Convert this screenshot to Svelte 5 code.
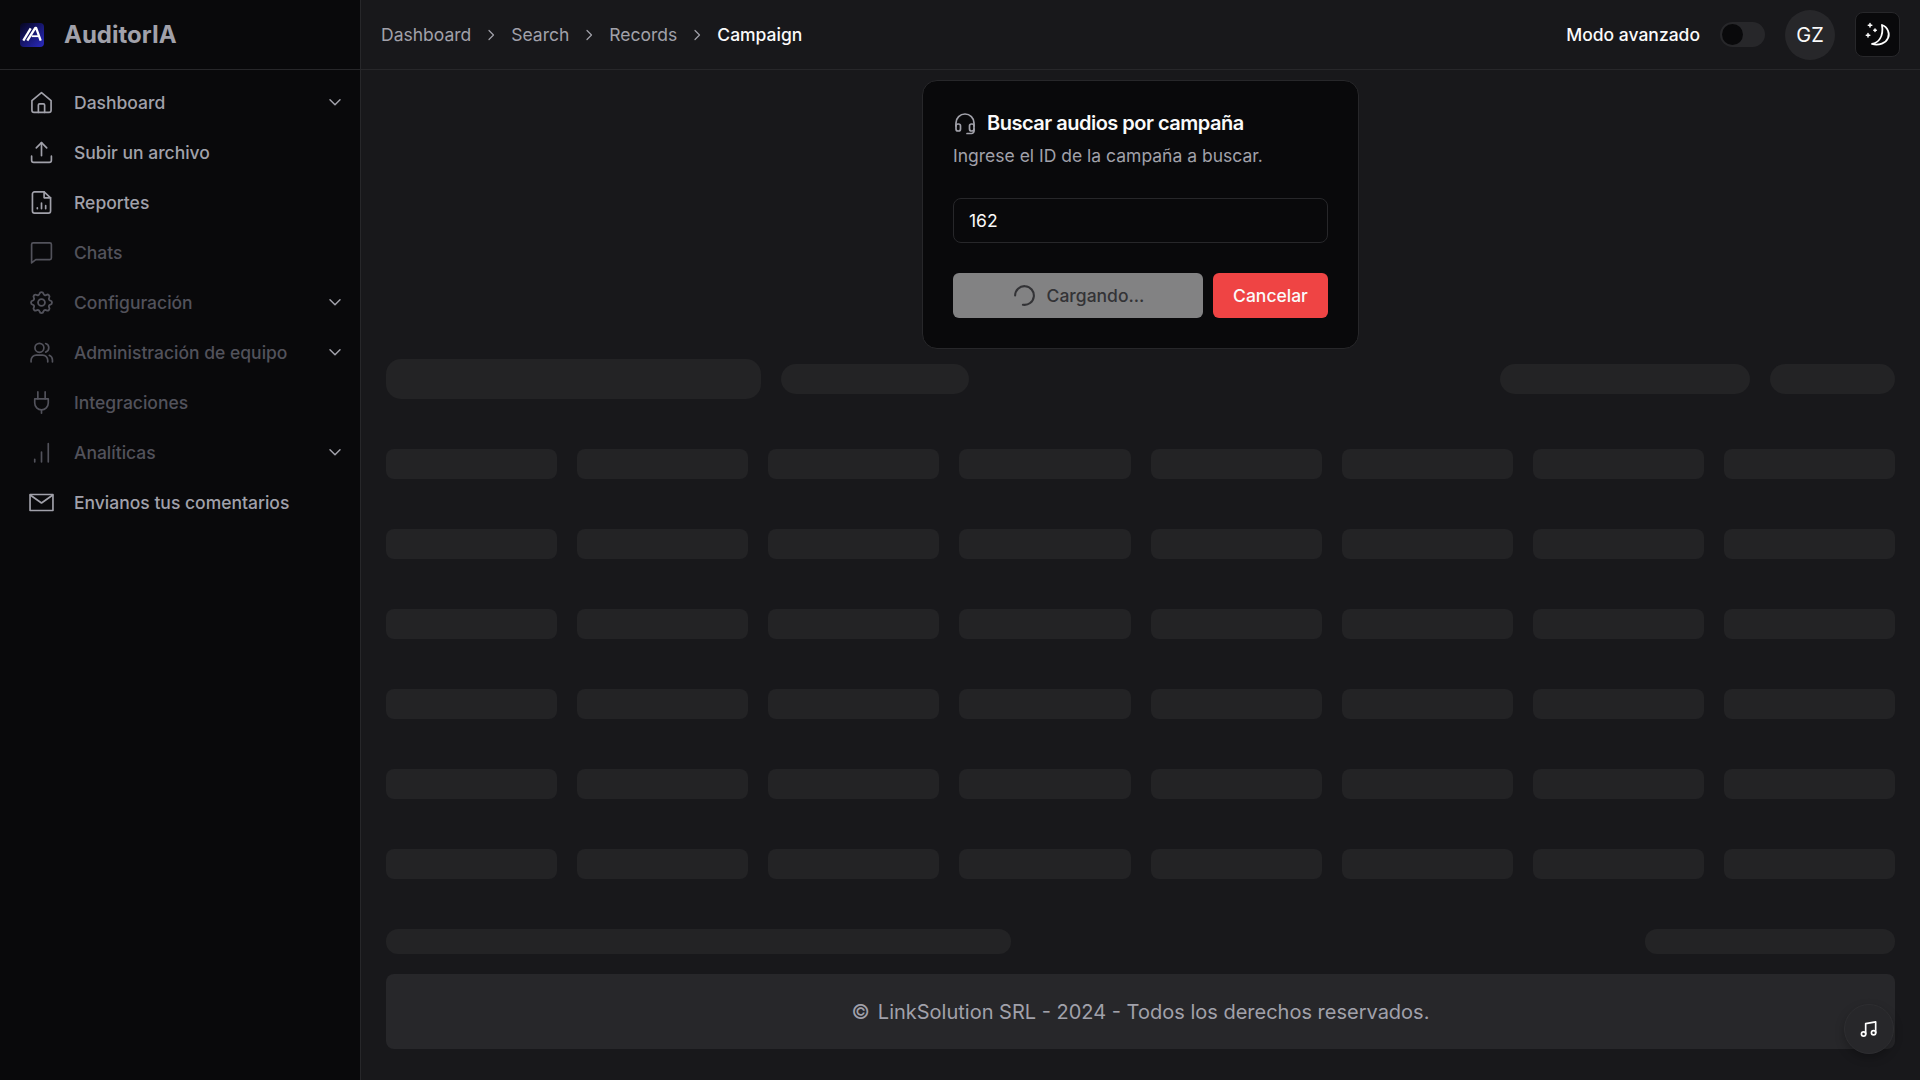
<script lang="ts">
	interface NavItem {
		label: string;
		icon: string;
		dim?: boolean;
		caret?: boolean;
	}

	const navItems: NavItem[] = [
		{ label: "Dashboard", icon: "home", caret: true },
		{ label: "Subir un archivo", icon: "upload" },
		{ label: "Reportes", icon: "report" },
		{ label: "Chats", icon: "chat", dim: true },
		{ label: "Configuración", icon: "gear", dim: true, caret: true },
		{ label: "Administración de equipo", icon: "users", dim: true, caret: true },
		{ label: "Integraciones", icon: "plug", dim: true },
		{ label: "Analíticas", icon: "bars", dim: true, caret: true },
		{ label: "Envianos tus comentarios", icon: "mail" },
	];

	const crumbs = ["Dashboard", "Search", "Records"];
	const rows = [0, 1, 2, 3, 4, 5];
	const cols = [0, 1, 2, 3, 4, 5, 6, 7];
</script>

<div class="shell">
	<aside class="sidebar">
		<div class="brand">
			<svg class="logo" viewBox="0 0 24 24" width="24" height="24" aria-hidden="true">
				<defs>
					<linearGradient id="lg" x1="0" y1="0" x2="1" y2="1">
						<stop offset="0" stop-color="#05051f" />
						<stop offset="1" stop-color="#2a2ac0" />
					</linearGradient>
				</defs>
				<rect width="24" height="24" rx="4" fill="url(#lg)" />
				<g stroke="#fff" stroke-width="2.300" fill="none" stroke-linejoin="round">
					<path d="M3.300 17.700 10.700 5.300" />
					<path d="M7.300 17.700 15.300 4.800h.8l4.600 12.900" />
					<path d="M11.700 13.200h7.600" stroke-width="1.800" />
				</g>
			</svg>
			<span class="brand-name">AuditorIA</span>
		</div>
		<nav class="nav">
			{#each navItems as item}
				<div class="nav-item" class:dim={item.dim}>
					<svg class="nav-icon" viewBox="0 0 24 24" width="25" height="25" fill="none" stroke="currentColor" stroke-width="1.600" stroke-linecap="round" stroke-linejoin="round" aria-hidden="true">
						{#if item.icon === "home"}
							<path d="M2.800 10.200 12 2.600l9.200 7.600v9.300a2 2 0 0 1-2 2H4.800a2 2 0 0 1-2-2z" />
							<path d="M9 21.500v-7a1.200 1.200 0 0 1 1.200-1.200h3.600a1.200 1.200 0 0 1 1.200 1.200v7" />
						{:else if item.icon === "upload"}
							<path d="M2.500 15.500v4a2 2 0 0 0 2 2h15a2 2 0 0 0 2-2v-4" />
							<path d="M12 15V2.500" />
							<path d="m7 7.500 5-5 5 5" />
						{:else if item.icon === "report"}
							<path d="M14.500 1.800H5.300a2 2 0 0 0-2 2v16.400a2 2 0 0 0 2 2h13.400a2 2 0 0 0 2-2V7.500z" />
							<path d="M14.500 1.800v5.700h6.200" />
							<path d="M8 18v-1M12 18v-5.500M16 18v-3" />
						{:else if item.icon === "chat"}
							<path d="M4 2.800h16a1.500 1.500 0 0 1 1.500 1.500v13a1.500 1.500 0 0 1-1.500 1.500H6.500L2.500 22V4.300A1.500 1.500 0 0 1 4 2.800z" />
						{:else if item.icon === "gear"}
							<g transform="translate(-1.200 -1.200) scale(1.100)">
								<path d="M10.300 4.300c.4-1.800 3-1.800 3.400 0a1.700 1.700 0 0 0 2.600 1.100c1.500-1 3.400.9 2.400 2.400a1.700 1.700 0 0 0 1.100 2.600c1.800.4 1.800 3 0 3.400a1.700 1.700 0 0 0-1.100 2.600c1 1.500-.9 3.400-2.400 2.400a1.700 1.700 0 0 0-2.600 1.100c-.4 1.800-3 1.800-3.400 0a1.700 1.700 0 0 0-2.600-1.100c-1.500 1-3.400-.9-2.400-2.400a1.700 1.700 0 0 0-1.100-2.600c-1.800-.4-1.800-3 0-3.400a1.700 1.700 0 0 0 1.100-2.600c-1-1.500.9-3.400 2.400-2.400a1.700 1.700 0 0 0 2.600-1.100z" />
								<circle cx="12" cy="12" r="3" />
							</g>
						{:else if item.icon === "users"}
							<circle cx="10" cy="7.500" r="4.300" />
							<path d="M2 21v-1.500a5 5 0 0 1 5-5h6a5 5 0 0 1 5 5V21" />
							<path d="M16 3.400a4.300 4.300 0 0 1 0 8.200M19.500 14.700a5 5 0 0 1 3 4.600V21" />
						{:else if item.icon === "plug"}
							<path d="M8.500 1.800v6.700M15.500 1.800v6.700" />
							<path d="M5.500 8.500h13v4a6.500 6.500 0 0 1-13 0z" />
							<path d="M12 19v3.200" />
						{:else if item.icon === "bars"}
							<path d="M5.500 21v-2.500M12 21v-9.500M18.500 21V3.500" />
						{:else}
							<path d="M1 4.300h22v15.400H1z" />
							<path d="m1.500 5 10.500 7.500L22.500 5" />
						{/if}
					</svg>
					<span class="nav-label">{item.label}</span>
					{#if item.caret}
						<svg class="caret" viewBox="0 0 16 16" width="16" height="16" fill="none" stroke="currentColor" stroke-width="1.500" stroke-linecap="round" stroke-linejoin="round" aria-hidden="true">
							<path d="m3 5.800 5 5 5-5" />
						</svg>
					{/if}
				</div>
			{/each}
		</nav>
	</aside>

	<div class="main">
		<header class="topbar">
			<div class="crumbs">
				{#each crumbs as crumb}
					<span class="crumb">{crumb}</span>
					<svg class="sep" viewBox="0 0 16 16" width="16" height="16" fill="none" stroke="currentColor" stroke-width="1.200" stroke-linecap="round" stroke-linejoin="round" aria-hidden="true">
						<path d="m6 3.500 4.500 4.500L6 12.500" />
					</svg>
				{/each}
				<span class="crumb current">Campaign</span>
			</div>
			<div class="top-actions">
				<span class="mode-label">Modo avanzado</span>
				<div class="switch"><div class="thumb"></div></div>
				<div class="avatar">GZ</div>
				<button class="theme-btn" aria-label="Tema">
					<svg viewBox="0 0 43 43" width="43" height="43" fill="none" stroke="#fff" stroke-width="1.800" stroke-linecap="round" stroke-linejoin="round" aria-hidden="true">
						<path d="M26 12c6 2 8 9 6 13-2 5-9 8-16 6 6-1 12-7 10-19z" />
						<path d="M14 10.500v3.500M12.300 12.200h3.500M19 16v2.500M17.800 17.200h2.500M12 20.500V24M10.300 22.200h3.500" stroke-width="1.500" />
					</svg>
				</button>
			</div>
		</header>

		<div class="content">
			<section class="search-card">
				<div class="card-title">
					<svg viewBox="0 0 24 24" width="24" height="24" fill="none" stroke="#a1a1aa" stroke-width="1.700" stroke-linecap="round" stroke-linejoin="round" aria-hidden="true">
						<path d="M3 15v-3a9 9 0 0 1 18 0v3" />
						<rect x="3" y="13" width="4.500" height="7" rx="2" />
						<rect x="16.500" y="13" width="4.500" height="7" rx="2" />
						<path d="M21 18v2a2.500 2.500 0 0 1-2.500 2.500H14" />
					</svg>
					<h2>Buscar audios por campaña</h2>
				</div>
				<p class="card-sub">Ingrese el ID de la campaña a buscar.</p>
				<input class="id-input" value="162" />
				<div class="card-actions">
					<button class="btn loading" disabled>
						<svg class="spinner" viewBox="0 0 24 24" width="25" height="25" fill="none" stroke="#333336" stroke-width="2" stroke-linecap="round" aria-hidden="true">
							<path d="M3 12a9 9 0 1 1 7.500 8.900" />
						</svg>
						Cargando...
					</button>
					<button class="btn cancel">Cancelar</button>
				</div>
			</section>

			<div class="sk-toolbar">
				<div class="sk search"></div>
				<div class="sk filter"></div>
				<div class="toolbar-gap"></div>
				<div class="sk columns"></div>
				<div class="sk view"></div>
			</div>

			<div class="sk-table">
				{#each rows as row (row)}
					<div class="sk-row">
						{#each cols as col (col)}
							<div class="sk cell"></div>
						{/each}
					</div>
				{/each}
			</div>

			<div class="sk-pager">
				<div class="sk count"></div>
				<div class="sk pages"></div>
			</div>

			<footer class="footer">
				<span class="copy">©</span>
				<span>LinkSolution SRL - 2024 - Todos los derechos reservados.</span>
			</footer>
		</div>
	</div>

	<button class="music-btn" aria-label="Música">
		<svg viewBox="0 0 24 24" width="20" height="20" fill="none" stroke="#fff" stroke-width="2" stroke-linecap="round" stroke-linejoin="round" aria-hidden="true">
			<path d="M8 18V5.500L20 3.500v13" />
			<circle cx="5.500" cy="18" r="2.600" />
			<circle cx="17.500" cy="16.500" r="2.600" />
		</svg>
	</button>
</div>

<style>
	:global(body) {
		margin: 0;
		background: #18181b;
		font-family: "Inter", "Noto Sans", sans-serif;
		color: #fafafa;
	}

	.shell {
		display: flex;
		width: 1920px;
		height: 1080px;
		overflow: hidden;
	}

	.sidebar {
		width: 360px;
		flex-shrink: 0;
		background: #09090b;
		border-right: 1px solid #27272a;
	}

	.brand {
		height: 69px;
		display: flex;
		align-items: center;
		gap: 20px;
		padding-left: 20px;
		border-bottom: 1px solid #27272a;
	}

	.brand-name {
		font-size: 24px;
		font-weight: 700;
		color: #a1a1aa;
	}

	.nav {
		padding-top: 7px;
	}

	.nav-item {
		height: 50px;
		display: flex;
		align-items: center;
		padding: 0 17px 0 29px;
		font-size: 17.5px;
		font-weight: 500;
		color: #a1a1aa;
	}

	.nav-item.dim {
		color: #52525b;
	}

	.nav-icon {
		flex-shrink: 0;
	}

	.nav-label {
		flex: 1;
		margin-left: 20px;
	}

	.caret {
		color: #a1a1aa;
	}

	.main {
		flex: 1;
		min-width: 0;
		display: flex;
		flex-direction: column;
	}

	.topbar {
		height: 69px;
		flex-shrink: 0;
		display: flex;
		align-items: center;
		justify-content: space-between;
		padding: 0 20px;
		border-bottom: 1px solid #27272a;
	}

	.crumbs {
		display: flex;
		align-items: center;
		gap: 12px;
		font-size: 17.5px;
		color: #a1a1aa;
	}

	.crumb.current {
		color: #fafafa;
		font-weight: 500;
	}

	.sep {
		color: #a1a1aa;
	}

	.top-actions {
		display: flex;
		align-items: center;
	}

	.mode-label {
		font-size: 17.5px;
		font-weight: 500;
		color: #fafafa;
		margin-right: 20px;
	}

	.switch {
		width: 45px;
		height: 25px;
		border-radius: 13px;
		background: #27272a;
		display: flex;
		align-items: center;
		padding-left: 2px;
		box-sizing: border-box;
	}

	.thumb {
		width: 21px;
		height: 21px;
		border-radius: 50%;
		background: #09090b;
	}

	.avatar {
		width: 50px;
		height: 50px;
		margin-left: 20px;
		border-radius: 50%;
		background: #27272a;
		display: flex;
		align-items: center;
		justify-content: center;
		font-size: 20px;
		color: #fafafa;
	}

	.theme-btn {
		width: 45px;
		height: 45px;
		margin-left: 20px;
		padding: 0;
		display: flex;
		align-items: center;
		justify-content: center;
		background: #09090b;
		border: 1px solid #27272a;
		border-radius: 8px;
	}

	.content {
		flex: 1;
		display: flex;
		flex-direction: column;
		padding: 10px 25px 0 25px;
	}

	.search-card {
		align-self: center;
		width: 437px;
		height: 269px;
		box-sizing: border-box;
		padding: 30px;
		background: #09090b;
		border: 1px solid #27272a;
		border-radius: 15px;
	}

	.card-title {
		display: flex;
		align-items: center;
		gap: 10px;
		height: 24px;
	}

	.card-title h2 {
		margin: 0;
		font-size: 20px;
		font-weight: 600;
		letter-spacing: -0.5px;
		color: #fafafa;
	}

	.card-sub {
		margin: 8px 0 0;
		font-size: 17.5px;
		line-height: 25px;
		color: #a1a1aa;
	}

	.id-input {
		display: block;
		width: 100%;
		height: 45px;
		margin-top: 30px;
		box-sizing: border-box;
		padding: 0 15px;
		background: #09090b;
		border: 1px solid #27272a;
		border-radius: 8px;
		font: 400 17.5px "Inter", sans-serif;
		color: #fafafa;
		outline: none;
	}

	.card-actions {
		display: flex;
		gap: 10px;
		margin-top: 30px;
	}

	.btn {
		height: 45px;
		padding: 0;
		border: none;
		border-radius: 6px;
		font: 500 17.5px "Inter", sans-serif;
		display: flex;
		align-items: center;
		justify-content: center;
	}

	.btn.loading {
		width: 250px;
		gap: 10px;
		background: #828283;
		color: #333336;
	}

	.btn.cancel {
		width: 115px;
		background: #ef4444;
		color: #fafafa;
	}

	.sk {
		background: #232325;
		border-radius: 8px;
	}

	.sk-toolbar {
		display: flex;
		align-items: center;
		margin-top: 10px;
		height: 40px;
	}

	.sk.search {
		width: 375px;
		height: 40px;
		border-radius: 15px;
	}

	.sk.filter {
		width: 188px;
		height: 30px;
		margin-left: 20px;
		border-radius: 15px;
	}

	.toolbar-gap {
		flex: 1;
	}

	.sk.columns {
		width: 250px;
		height: 30px;
		border-radius: 15px;
	}

	.sk.view {
		width: 125px;
		height: 30px;
		margin-left: 20px;
		border-radius: 15px;
	}

	.sk-table {
		margin-top: 50px;
		display: flex;
		flex-direction: column;
		gap: 50px;
	}

	.sk-row {
		display: grid;
		grid-template-columns: repeat(8, 1fr);
		gap: 20px;
	}

	.sk.cell {
		height: 30px;
	}

	.sk-pager {
		display: flex;
		justify-content: space-between;
		margin-top: 50px;
	}

	.sk.count {
		width: 625px;
		height: 25px;
		border-radius: 12px;
	}

	.sk.pages {
		width: 250px;
		height: 25px;
		border-radius: 12px;
	}

	.footer {
		height: 75px;
		margin-top: 20px;
		display: flex;
		align-items: center;
		justify-content: center;
		gap: 8px;
		background: #27272a;
		border-radius: 8px;
		font-size: 20px;
		color: #a1a1aa;
	}

	.music-btn {
		position: fixed;
		left: 1844px;
		top: 1004px;
		width: 50px;
		height: 50px;
		padding: 0;
		display: flex;
		align-items: center;
		justify-content: center;
		background: #27272a;
		border: 1px solid #2e2e31;
		border-radius: 50%;
		box-shadow: 0 4px 10px rgba(0, 0, 0, 0.25);
	}
</style>
